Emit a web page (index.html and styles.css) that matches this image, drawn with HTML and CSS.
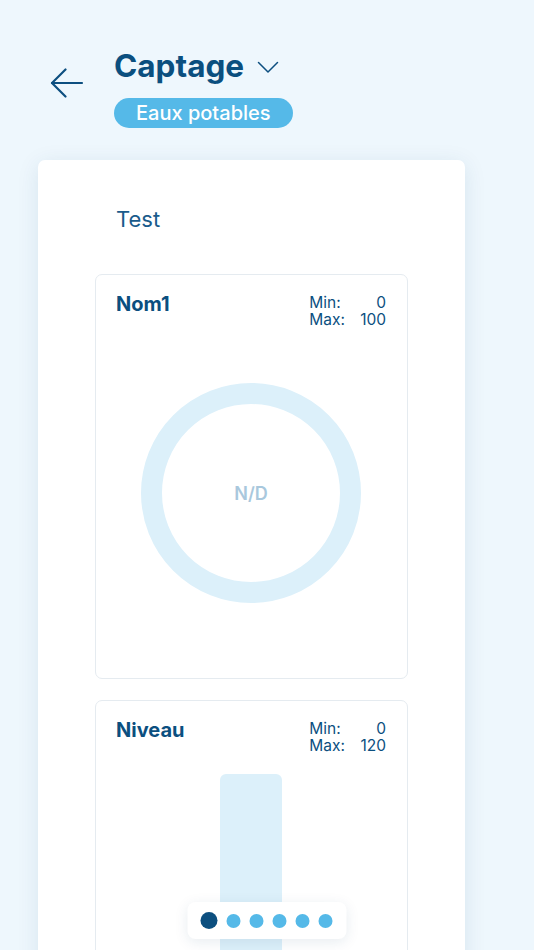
FILE: index.html
```html
<!DOCTYPE html>
<html lang="fr">
<head>
<meta charset="utf-8">
<title>Captage</title>
<link rel="stylesheet" href="styles.css">
</head>
<body>
<header class="header">
  <svg class="back" width="34" height="32" viewBox="0 0 34 32" fill="none" stroke="#0d4f80" stroke-width="2.2" stroke-linecap="round" stroke-linejoin="round">
    <path d="M32 15H2"/>
    <path d="M15.5 1.5L2 15l13.5 13.5"/>
  </svg>
  <div class="title-col">
    <div class="title-row">
      <h1 class="title">Captage</h1>
      <svg class="chev" width="22" height="13" viewBox="0 0 22 13" fill="none" stroke="#0d4f80" stroke-width="1.5" stroke-linecap="round" stroke-linejoin="round">
        <path d="M1.5 1.5l9.5 9.5 9.5-9.5"/>
      </svg>
    </div>
    <span class="pill">Eaux potables</span>
  </div>
</header>

<main class="card">
  <div class="card-title">Test</div>

  <section class="widget">
    <div class="widget-head">
      <div class="widget-name">Nom1</div>
      <div class="minmax">
        <span>Min:</span><span class="num">0</span>
        <span>Max:</span><span class="num">100</span>
      </div>
    </div>
    <div class="gauge-wrap">
      <div class="gauge"><span class="nd">N/D</span></div>
    </div>
  </section>

  <section class="widget widget-level">
    <div class="widget-head">
      <div class="widget-name">Niveau</div>
      <div class="minmax">
        <span>Min:</span><span class="num">0</span>
        <span>Max:</span><span class="num">120</span>
      </div>
    </div>
    <div class="bar-wrap">
      <div class="bar"></div>
    </div>
  </section>
</main>

<nav class="dots">
  <span class="dot active"></span>
  <span class="dot"></span>
  <span class="dot"></span>
  <span class="dot"></span>
  <span class="dot"></span>
  <span class="dot"></span>
</nav>
</body>
</html>
```

FILE: styles.css
```css
* { box-sizing: border-box; }

html, body {
  margin: 0;
  padding: 0;
}

body {
  background: #eef7fd;
  font-family: Inter, "Noto Sans", "Liberation Sans", sans-serif;
  color: #0b4f7f;
  height: 950px;
  overflow: hidden;
}

.header {
  display: flex;
  align-items: flex-start;
  gap: 30px;
  padding: 48px 0 0 50px;
}

.back {
  margin-top: 20px;
  flex: none;
}

.title-col {
  display: flex;
  flex-direction: column;
  align-items: flex-start;
}

.title-row {
  display: flex;
  align-items: center;
  gap: 13px;
  height: 36px;
}

.title {
  margin: 0;
  font-size: 31.5px;
  line-height: 36px;
  font-weight: 700;
  color: #0b4f7f;
}

.chev {
  margin-top: 2px;
}

.pill {
  margin-top: 14px;
  height: 30px;
  line-height: 30px;
  padding: 0 22px;
  border-radius: 15px;
  background: #55b9e8;
  color: #ffffff;
  font-size: 20px;
  font-weight: 500;
}

.card {
  margin: 32px 0 0 38px;
  width: 427px;
  background: #ffffff;
  border-radius: 7px;
  box-shadow: 0 4px 22px rgba(20, 70, 110, 0.10);
  padding: 46px 57px 0;
  min-height: 900px;
}

.card-title {
  font-size: 22px;
  line-height: 27px;
  color: #1a5b8b;
  padding-left: 21px;
  margin-bottom: 41px;
}

.widget {
  border: 1px solid #e5ebf0;
  border-radius: 7px;
  padding: 17px 21px 17px 20px;
  margin-bottom: 21px;
}

.widget-head {
  display: flex;
  justify-content: space-between;
  align-items: flex-start;
}

.widget-name {
  font-size: 20px;
  line-height: 24px;
  font-weight: 700;
  color: #0b4f7f;
}

.minmax {
  margin-top: 2px;
  display: grid;
  grid-template-columns: auto 41px;
  column-gap: 0;
  font-size: 15.5px;
  line-height: 17px;
  color: #0b4f7f;
}

.minmax .num {
  text-align: right;
}

.gauge-wrap {
  display: flex;
  justify-content: center;
  padding: 55px 0 58px;
}

.gauge {
  width: 220px;
  height: 220px;
  border-radius: 50%;
  border: 21px solid #dcf0fa;
  display: flex;
  align-items: center;
  justify-content: center;
}

.nd {
  font-size: 18px;
  font-weight: 600;
  color: #a9c8dd;
}

.widget-level {
  padding-bottom: 0;
}

.bar-wrap {
  display: flex;
  justify-content: center;
  padding-top: 20px;
}

.bar {
  width: 62px;
  height: 260px;
  background: #dcf0fa;
  border-radius: 6px 6px 0 0;
}

.dots {
  position: fixed;
  left: 50%;
  bottom: 11px;
  transform: translateX(-50%);
  display: flex;
  align-items: center;
  gap: 9px;
  height: 37px;
  padding: 0 14px 0 13px;
  background: #ffffff;
  border-radius: 8px;
  box-shadow: 0 3px 14px rgba(20, 70, 110, 0.10);
}

.dot {
  width: 14px;
  height: 14px;
  border-radius: 50%;
  background: #55b9e8;
}

.dot.active {
  width: 17px;
  height: 17px;
  background: #0c4f7f;
}
```
